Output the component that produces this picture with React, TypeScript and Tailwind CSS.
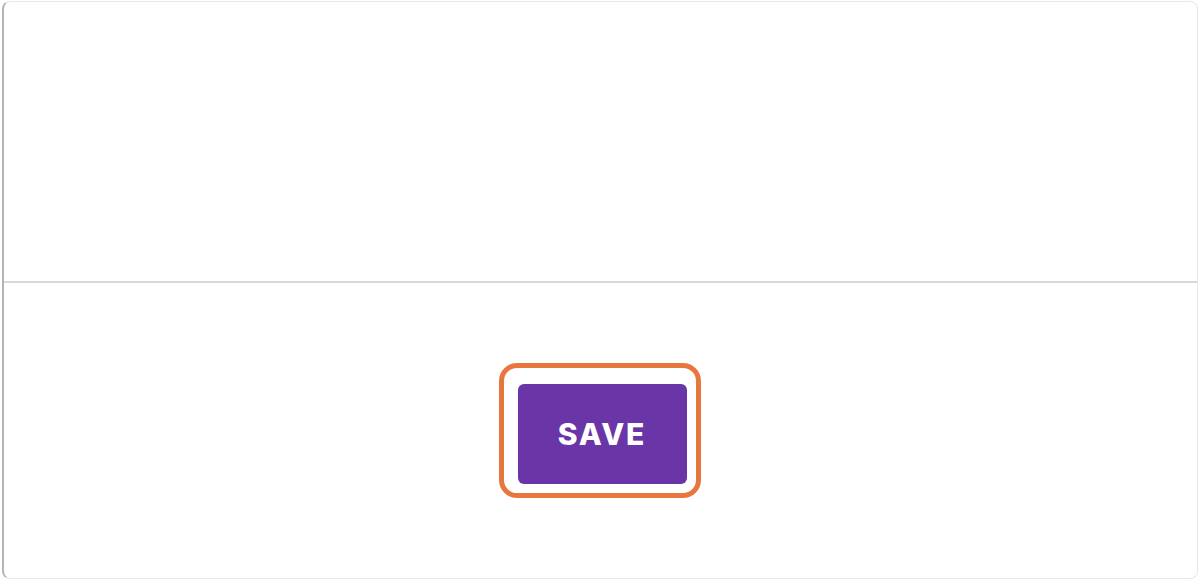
import React from 'react';

export default function App() {
  return (
    <div className="w-[1200px] h-[581px] bg-white pt-[1px] px-[2px]">
      {/* card */}
      <div className="h-[578px] flex flex-col rounded-lg border border-[#e6e6ec] border-l-2 border-l-[#b4b4b4] bg-white overflow-hidden">
        <div className="h-[279px]" />
        <div className="h-[2px] bg-[#d9d9d9]" />
        <div className="flex-1 flex items-center justify-center pr-[2px]">
          {/* highlight ring round the button */}
          <div className="rounded-[18px] border-[5px] border-[#e8773f] pl-[14px] pr-[9px] pt-[16px] pb-[9px]">
            <button className="w-[169px] h-[100px] rounded-md bg-[#6a35a6] text-white text-[30px] font-extrabold tracking-[0.06em] font-['Inter',sans-serif]">
              SAVE
            </button>
          </div>
        </div>
      </div>
    </div>
  );
}
